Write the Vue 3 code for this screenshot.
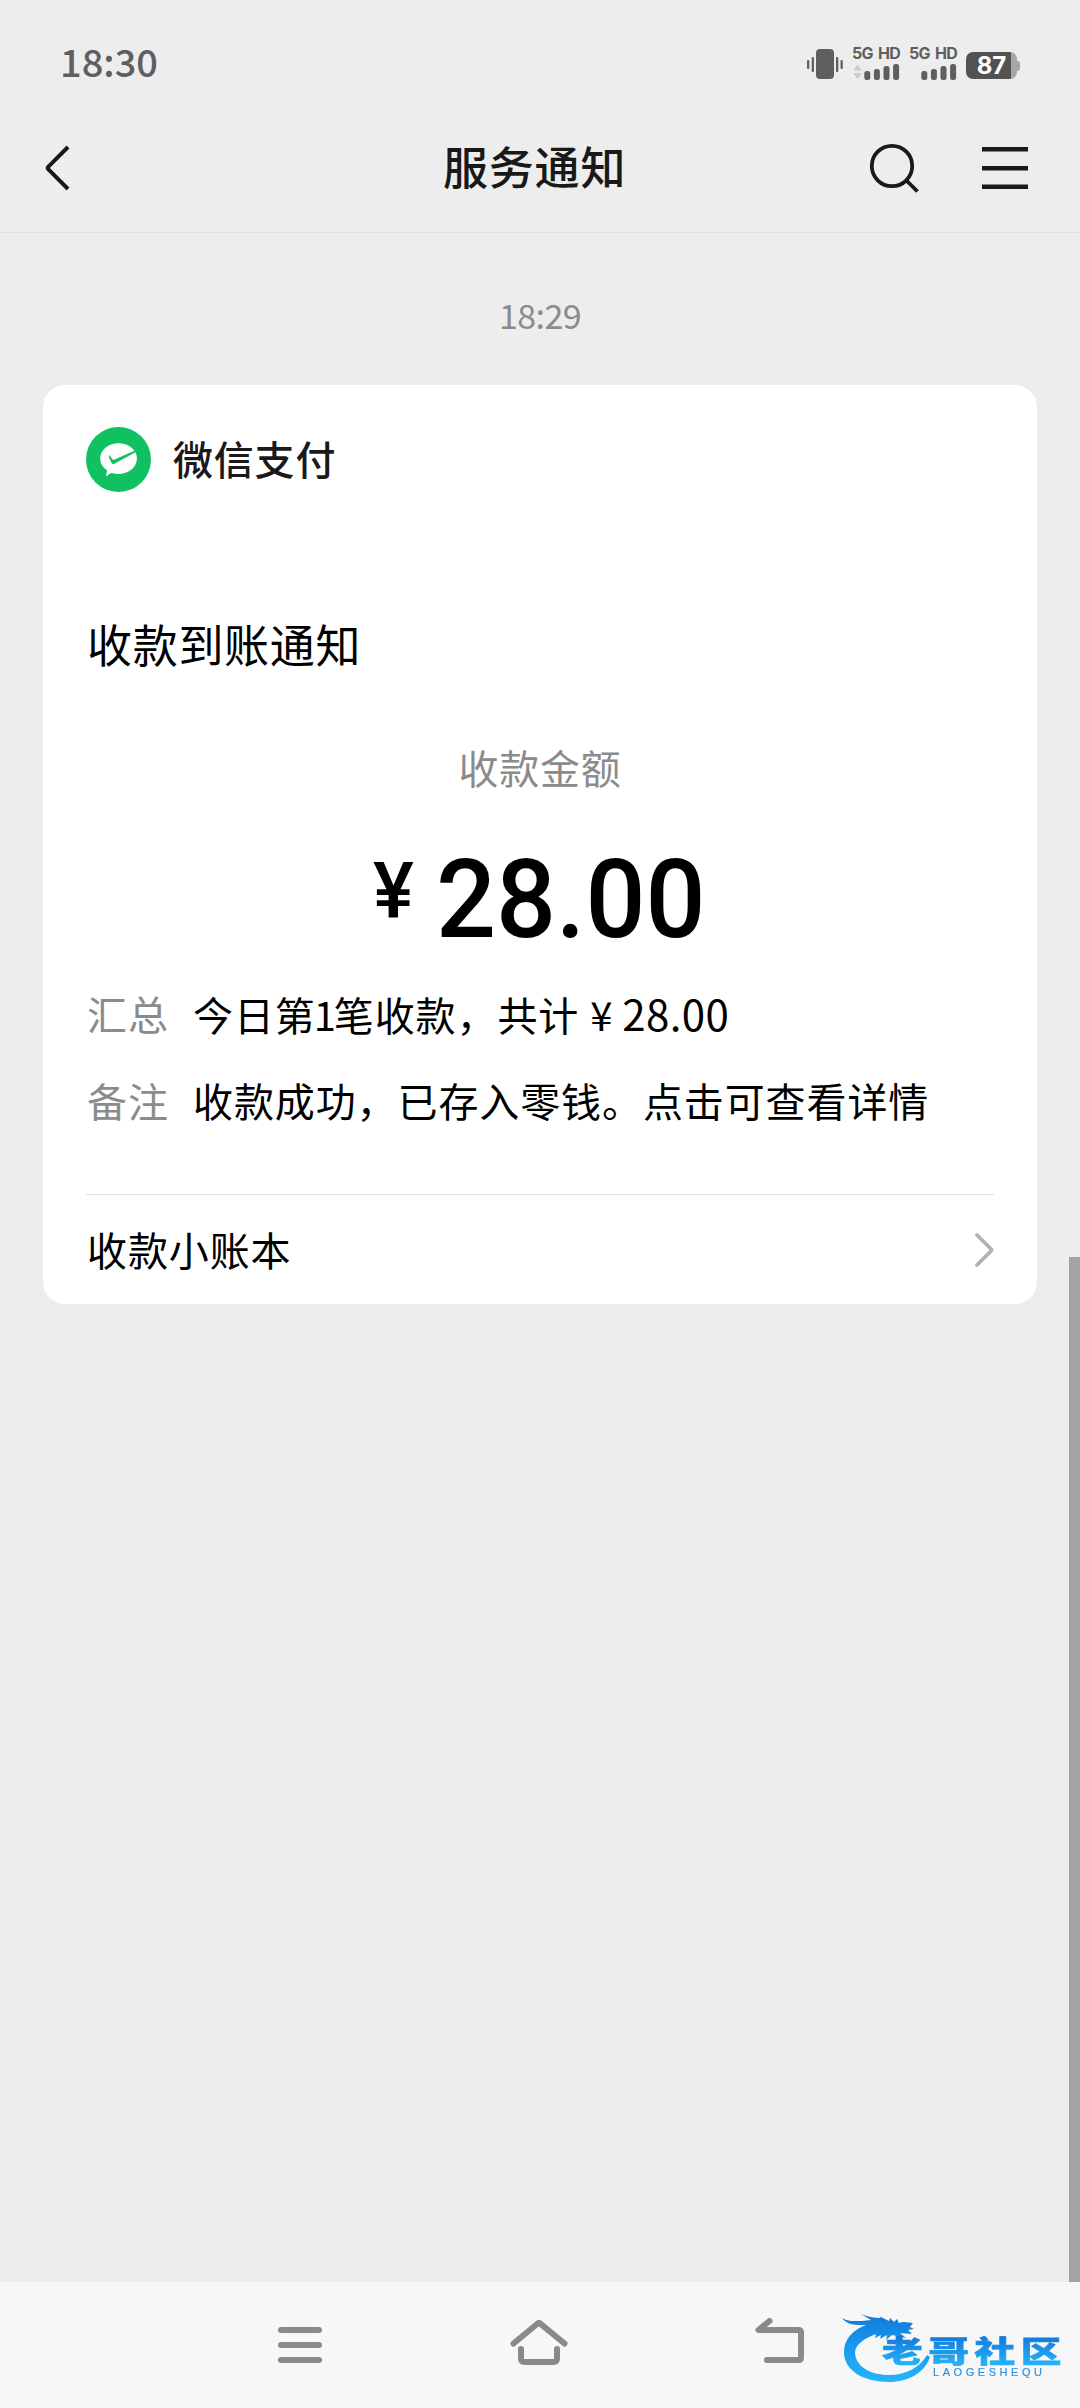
<script setup>
const cells = [
  { h: 9, y: 17 },
  { h: 11, y: 15 },
  { h: 14, y: 12 },
  { h: 16, y: 10 },
]
</script>

<template>
  <div class="screen">
    <header class="top">
      <div class="status">
        <span class="clock">18:30</span>
        <div class="indicators">
          <svg class="vibrate" width="36" height="30" viewBox="0 0 36 30" fill="#5f5f5f">
            <rect x="9" y="0" width="18" height="30" rx="4" />
            <rect x="4.7" y="8" width="2.3" height="15" rx="1" />
            <rect x="0" y="11" width="2.3" height="9" rx="1" />
            <rect x="29" y="8" width="2.3" height="15" rx="1" />
            <rect x="33.5" y="11" width="2.3" height="9" rx="1" />
          </svg>
          <div v-for="n in 2" :key="n" class="sim">
            <span class="net">5G HD</span>
            <svg width="48" height="18" viewBox="0 8 48 18">
              <g v-if="n === 1" fill="#cccccc">
                <path d="M5.500 10.500l4.500 6h-9z" />
                <path d="M5.500 25l4.500-6h-9z" />
              </g>
              <rect
                v-for="(c, i) in cells"
                :key="i"
                :x="12.300 + i * 9.600"
                :y="c.y"
                width="6"
                :height="c.h"
                rx="2.500"
                fill="#5f5f5f"
              />
            </svg>
          </div>
          <div class="battery"><span>87</span></div>
        </div>
      </div>
      <div class="bar">
        <svg class="back" width="26" height="48" viewBox="0 0 26 48" fill="none" stroke="#191919" stroke-width="4">
          <path d="M24 3L4.200 22.800q-1.200 1.200 0 2.400L24 45" />
        </svg>
        <h1>服务通知</h1>
        <svg class="search" width="50" height="50" viewBox="0 0 50 50" fill="none" stroke="#191919" stroke-width="3.800">
          <circle cx="23" cy="23" r="20.200" />
          <path d="M37 37L48.500 48.500" />
        </svg>
        <svg class="menu" width="46" height="44" viewBox="0 0 46 44" fill="#191919">
          <rect y="1" width="46" height="4.500" />
          <rect y="20" width="46" height="4.500" />
          <rect y="38.500" width="46" height="4.500" />
        </svg>
      </div>
    </header>

    <main>
      <time>18:29</time>
      <section class="card">
        <div class="brand">
          <svg width="65" height="65" viewBox="0 0 65 65">
            <circle cx="32.500" cy="32.500" r="32.500" fill="#0fc160" />
            <path
              fill="#fff"
              d="M32.500 16.300c7 0 12.800 3 16 7.500L28.600 32.500c-1 .4-2 .1-2.500-.8l-3.300-3.900.2 3 2.700 5.300c.5 1 1.700 1.200 2.600.6L49.500 25.300c.9 2 1.400 4 1.400 6.200 0 8.500-8.100 15.500-18.400 15.500-2.600 0-4.900-.4-7-1.200l-4.700 2.900c-.6.300-1-.2-.8-.8l1.200-4.400c-4.300-2.900-7-7.200-7-12 0-8.400 8.200-15.200 18.300-15.200z"
            />
          </svg>
          <span>微信支付</span>
        </div>
        <h2>收款到账通知</h2>
        <p class="caption">收款金额</p>
        <div class="amount"><span class="yen">¥</span><span class="num">28.00</span></div>
        <dl>
          <div class="row">
            <dt>汇总</dt>
            <dd>今日第<span class="count">1</span>笔收款，共计<span class="unit">¥</span><span class="sum">28.00</span></dd>
          </div>
          <div class="row">
            <dt>备注</dt>
            <dd>收款成功，已存入零钱。点击可查看详情</dd>
          </div>
        </dl>
        <div class="more">
          <span>收款小账本</span>
          <svg width="20" height="38" viewBox="0 0 20 38" fill="none" stroke="#b2b2b2" stroke-width="3.800" stroke-linecap="round">
            <path d="M3 4l14 14q1 1 0 2L3 34" />
          </svg>
        </div>
      </section>
      <i class="scrollbar"></i>
    </main>

    <nav>
      <svg width="46" height="44" viewBox="0 0 46 44" stroke="#8a8a8a" stroke-width="6" stroke-linecap="round">
        <path d="M4 7h38M4 22h38M4 37h38" />
      </svg>
      <svg width="58" height="52" viewBox="0 0 58 52" fill="none" stroke="#8a8a8a" stroke-width="6" stroke-linecap="round" stroke-linejoin="round">
        <path d="M3.500 25.500L28 5.300q1-.8 2 0L54.500 25.500" />
        <path d="M11 31v9.500q0 3.500 3.500 3.500h29q3.500 0 3.500-3.500V31" />
      </svg>
      <svg width="50" height="48" viewBox="0 0 50 48" fill="none" stroke="#8a8a8a" stroke-width="6" stroke-linecap="round" stroke-linejoin="round">
        <path d="M14.500 3L3.500 12h40q2.500 0 2.500 2.500V39.500q0 2.500-2.500 2.500H12" />
      </svg>
      <div class="watermark">
        <svg width="225" height="76" viewBox="0 0 225 76">
          <defs>
            <linearGradient id="sky" x1="0" y1="0" x2="0" y2="1">
              <stop offset="0" stop-color="#1278d8" />
              <stop offset="0.5" stop-color="#1a9bf2" />
              <stop offset="1" stop-color="#25b4fa" />
            </linearGradient>
            <linearGradient id="ink" gradientUnits="userSpaceOnUse" x1="0" y1="-25" x2="0" y2="2">
              <stop offset="0" stop-color="#1279dc" />
              <stop offset="1" stop-color="#25b0f8" />
            </linearGradient>
          </defs>
          <path
            fill="url(#sky)"
            d="M2 5c6 4 13 3 20 3l9-1-10-6c8 3 13 4 20 4l-2-2 10 5 1-3 4 4 3-3 2 4c5-2 10 0 14 0l-3 4 4 2-6 1 4 4-12-1 6 5-14-3-6 5 1-5-7 4 1-4-6 3 1-4C26 25 16 30 15 39c0 14 15 23 34 23 18 0 31-8 38-20l3 2c-5 15-21 25-41 25C24 69 4 58 4 39c0-13 9-22 22-27-11 0-19 0-24-7z"
          />
          <g font-family="'Noto Sans CJK SC', sans-serif" font-weight="900" fill="url(#ink)" stroke="url(#ink)" stroke-width=".6">
            <text transform="translate(42 48.500) scale(1.380 1)" font-size="29.500" textLength="130" lengthAdjust="spacing">老哥社区</text>
          </g>
          <text x="93" y="63" font-family="'Liberation Sans', sans-serif" font-size="11" textLength="109" fill="#3492dc" stroke="#3492dc" stroke-width=".2">LAOGESHEQU</text>
        </svg>
      </div>
    </nav>
  </div>
</template>

<style>
body {
  margin: 0;
  background: #ededed;
}
</style>

<style scoped>
.screen {
  width: 1080px;
  height: 2408px;
  display: flex;
  flex-direction: column;
  background: #ededed;
  font-family: 'Noto Sans CJK SC', sans-serif;
  color: #000;
  overflow: hidden;
}
h1, h2, p, dl, dt, dd {
  margin: 0;
  font-weight: 400;
}
svg {
  display: block;
  flex: none;
}
.top {
  height: 233px;
  box-sizing: border-box;
  border-bottom: 1px solid #dedede;
}
.status {
  height: 102px;
  display: flex;
  justify-content: space-between;
  padding: 0 60px 0 60px;
}
.clock {
  margin-top: 41px;
  line-height: 40px;
  font-size: 38px;
  font-weight: 500;
  color: #5f5f5f;
}
.indicators {
  display: flex;
  align-items: flex-start;
}
.vibrate {
  margin: 49px 9px 0 0;
}
.sim {
  width: 48px;
  margin: 45px 9px 0 0;
}
.net {
  display: block;
  height: 17px;
  line-height: 17px;
  font-family: Inter, sans-serif;
  font-size: 16px;
  font-weight: 700;
  white-space: nowrap;
  color: #5f5f5f;
  letter-spacing: -0.7px;
  word-spacing: 2px;
}
.battery {
  position: relative;
  width: 51px;
  height: 27px;
  margin: 52px 3px 0 0;
  border-radius: 7px;
  background: linear-gradient(to right, #525252 45px, #a6a6a6 45px);
  text-align: center;
  line-height: 28px;
  font-family: Inter, sans-serif;
  font-size: 24px;
  font-weight: 700;
  color: #fff;
}
.battery::after {
  content: '';
  position: absolute;
  left: 51px;
  top: 9px;
  width: 3px;
  height: 10px;
  border-radius: 0 3px 3px 0;
  background: #a6a6a6;
}
.bar {
  height: 132px;
  display: flex;
  align-items: center;
}
.back {
  margin-left: 44px;
}
.bar h1 {
  margin: -4px 0 0 373px;
  width: 426px;
  font-size: 45px;
  font-weight: 500;
  letter-spacing: 0.8px;
  line-height: 60px;
  color: #191919;
}
.menu {
  margin-left: 63px;
}
main {
  position: relative;
  height: 2049px;
}
time {
  display: block;
  padding: 60px 0 48px;
  line-height: 44px;
  font-size: 34px;
  letter-spacing: -0.6px;
  text-align: center;
  color: #8b8b8b;
}
.card {
  width: 994px;
  height: 919px;
  margin-left: 43px;
  box-sizing: border-box;
  padding: 42px 43px 0;
  border-radius: 22px;
  background: #fff;
}
.brand {
  display: flex;
  align-items: center;
  gap: 22px;
  height: 65px;
  font-size: 40px;
  font-weight: 500;
  letter-spacing: 0.8px;
  color: #191919;
}
.brand span {
  line-height: 60px;
  margin-top: -3px;
}
h2 {
  margin-top: 122px;
  margin-left: 1px;
  height: 60px;
  line-height: 60px;
  font-size: 45px;
  letter-spacing: 0.7px;
}
.caption {
  margin-top: 63px;
  height: 60px;
  line-height: 60px;
  text-align: center;
  font-size: 40px;
  letter-spacing: 0.8px;
  color: #8b8b8b;
}
.amount {
  display: flex;
  height: 120px;
  margin: 43px 0 0 287px;
  font-family: Roboto, sans-serif;
  font-weight: 500;
}
.yen {
  width: 63px;
  font-size: 77px;
  line-height: 102px;
}
.num {
  font-size: 110px;
  line-height: 120px;
  transform: scaleX(0.96);
  transform-origin: left;
}
dl {
  margin-top: 23px;
}
.row {
  display: flex;
  height: 87px;
  line-height: 60px;
  font-size: 40px;
  letter-spacing: 0.9px;
  white-space: nowrap;
}
dt {
  width: 106px;
  padding-left: 1px;
  color: #8b8b8b;
}
.count {
  margin: 0 -3px 0 -2px;
}
.unit {
  margin: 0 9px 0 11px;
}
.sum {
  font-size: 42px;
  letter-spacing: 0.4px;
}
.more {
  display: flex;
  justify-content: space-between;
  align-items: center;
  height: 110px;
  margin-top: 37px;
  border-top: 1px solid #e2e2e2;
  font-size: 40px;
  letter-spacing: 0.9px;
}
.more span {
  margin: -3px 0 0 1px;
}
.scrollbar {
  position: absolute;
  right: 0;
  top: 1024px;
  bottom: 0;
  width: 11px;
  background: #a3a3a3;
}
nav {
  position: relative;
  flex: 1;
  display: flex;
  align-items: flex-start;
  padding: 41px 0 0 277px;
  background: #f7f7f7;
}
nav > svg:nth-of-type(2) {
  margin: -5px 0 0 187px;
}
nav > svg:nth-of-type(3) {
  margin: -5px 0 0 187px;
}
.watermark {
  position: absolute;
  left: 840px;
  top: 31px;
  filter: blur(0.5px);
}
</style>
